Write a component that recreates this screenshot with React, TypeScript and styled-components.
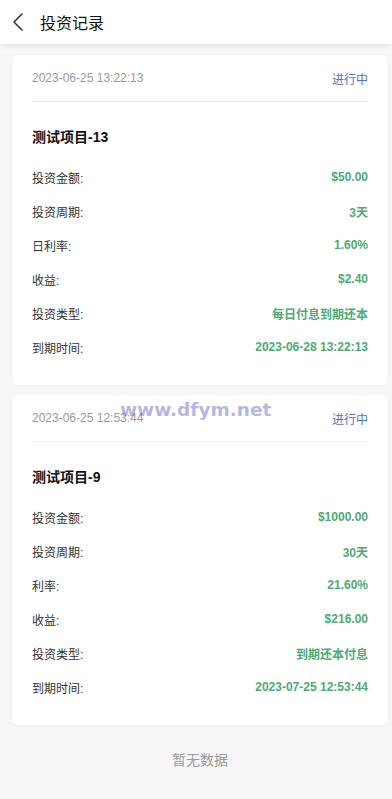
import React from "react";
import styled, { createGlobalStyle } from "styled-components";

const Global = createGlobalStyle`
  html, body { margin: 0; padding: 0; background: #f7f7f7; }
  body { font-family: Arial, "Liberation Sans", "Noto Sans CJK SC", sans-serif; }
  * { box-sizing: border-box; }
`;

const Page = styled.div`
  min-height: 799px;
  background: #f7f7f7;
  position: relative;
`;

const Header = styled.header`
  height: 44px;
  background: #fff;
  display: flex;
  align-items: center;
  box-shadow: 0 2px 6px rgba(0, 0, 0, 0.08);
  position: relative;
  z-index: 1;
`;

const Back = styled.button`
  width: 40px;
  height: 44px;
  border: 0;
  background: none;
  padding: 0 0 0 11px;
  display: flex;
  align-items: center;
`;

const Title = styled.h1`
  margin: 0;
  font-size: 16px;
  font-weight: 400;
  color: #111;
`;

const List = styled.main`
  padding: 11px 4px 0 12px;
  display: flex;
  flex-direction: column;
  gap: 10px;
`;

const Card = styled.section`
  background: #fff;
  border-radius: 6px;
  padding: 0 20px 21px;
  box-shadow: 0 1px 4px rgba(0, 0, 0, 0.03);
  position: relative;
`;

const Top = styled.div`
  height: 47px;
  display: flex;
  align-items: center;
  justify-content: space-between;
  border-bottom: 1px solid #ececec;
  font-size: 12px;
`;

const Date = styled.span`
  color: #9a9a9a;
`;

const Status = styled.span`
  color: #4f72c8;
`;

const Name = styled.h2`
  margin: 0;
  padding: 25px 0 13px;
  line-height: 20px;
  font-size: 14px;
  font-weight: 700;
  color: #111;
`;

const Row = styled.div`
  height: 34px;
  display: flex;
  align-items: center;
  justify-content: space-between;
  font-size: 12px;
`;

const Label = styled.span`
  color: #333;
`;

const Value = styled.span`
  color: #4daa75;
  font-weight: 700;
`;

const Empty = styled.div`
  text-align: center;
  color: #999;
  font-size: 14px;
  padding: 24px 0 0 8px;
`;

const Watermark = styled.div`
  position: absolute;
  left: 120px;
  top: 399px;
  font-family: Verdana, "DejaVu Sans", sans-serif;
  font-weight: 700;
  font-size: 18.5px;
  color: rgba(110, 110, 200, 0.5);
  pointer-events: none;
`;

type Item = {
  date: string;
  name: string;
  rows: [string, string][];
};

const items: Item[] = [
  {
    date: "2023-06-25 13:22:13",
    name: "测试项目-13",
    rows: [
      ["投资金额:", "$50.00"],
      ["投资周期:", "3天"],
      ["日利率:", "1.60%"],
      ["收益:", "$2.40"],
      ["投资类型:", "每日付息到期还本"],
      ["到期时间:", "2023-06-28 13:22:13"],
    ],
  },
  {
    date: "2023-06-25 12:53:44",
    name: "测试项目-9",
    rows: [
      ["投资金额:", "$1000.00"],
      ["投资周期:", "30天"],
      ["利率:", "21.60%"],
      ["收益:", "$216.00"],
      ["投资类型:", "到期还本付息"],
      ["到期时间:", "2023-07-25 12:53:44"],
    ],
  },
];

export default function App() {
  return (
    <Page>
      <Global />
      <Header>
        <Back aria-label="back">
          <svg width="14" height="20" viewBox="0 0 14 20" fill="none">
            <path d="M11 2 L3 10 L11 18" stroke="#333" strokeWidth="1.6" strokeLinecap="round" strokeLinejoin="round" />
          </svg>
        </Back>
        <Title>投资记录</Title>
      </Header>
      <List>
        {items.map((it) => (
          <Card key={it.name}>
            <Top>
              <Date>{it.date}</Date>
              <Status>进行中</Status>
            </Top>
            <Name>{it.name}</Name>
            {it.rows.map(([l, v]) => (
              <Row key={l}>
                <Label>{l}</Label>
                <Value>{v}</Value>
              </Row>
            ))}
          </Card>
        ))}
      </List>
      <Empty>暂无数据</Empty>
      <Watermark>www.dfym.net</Watermark>
    </Page>
  );
}
